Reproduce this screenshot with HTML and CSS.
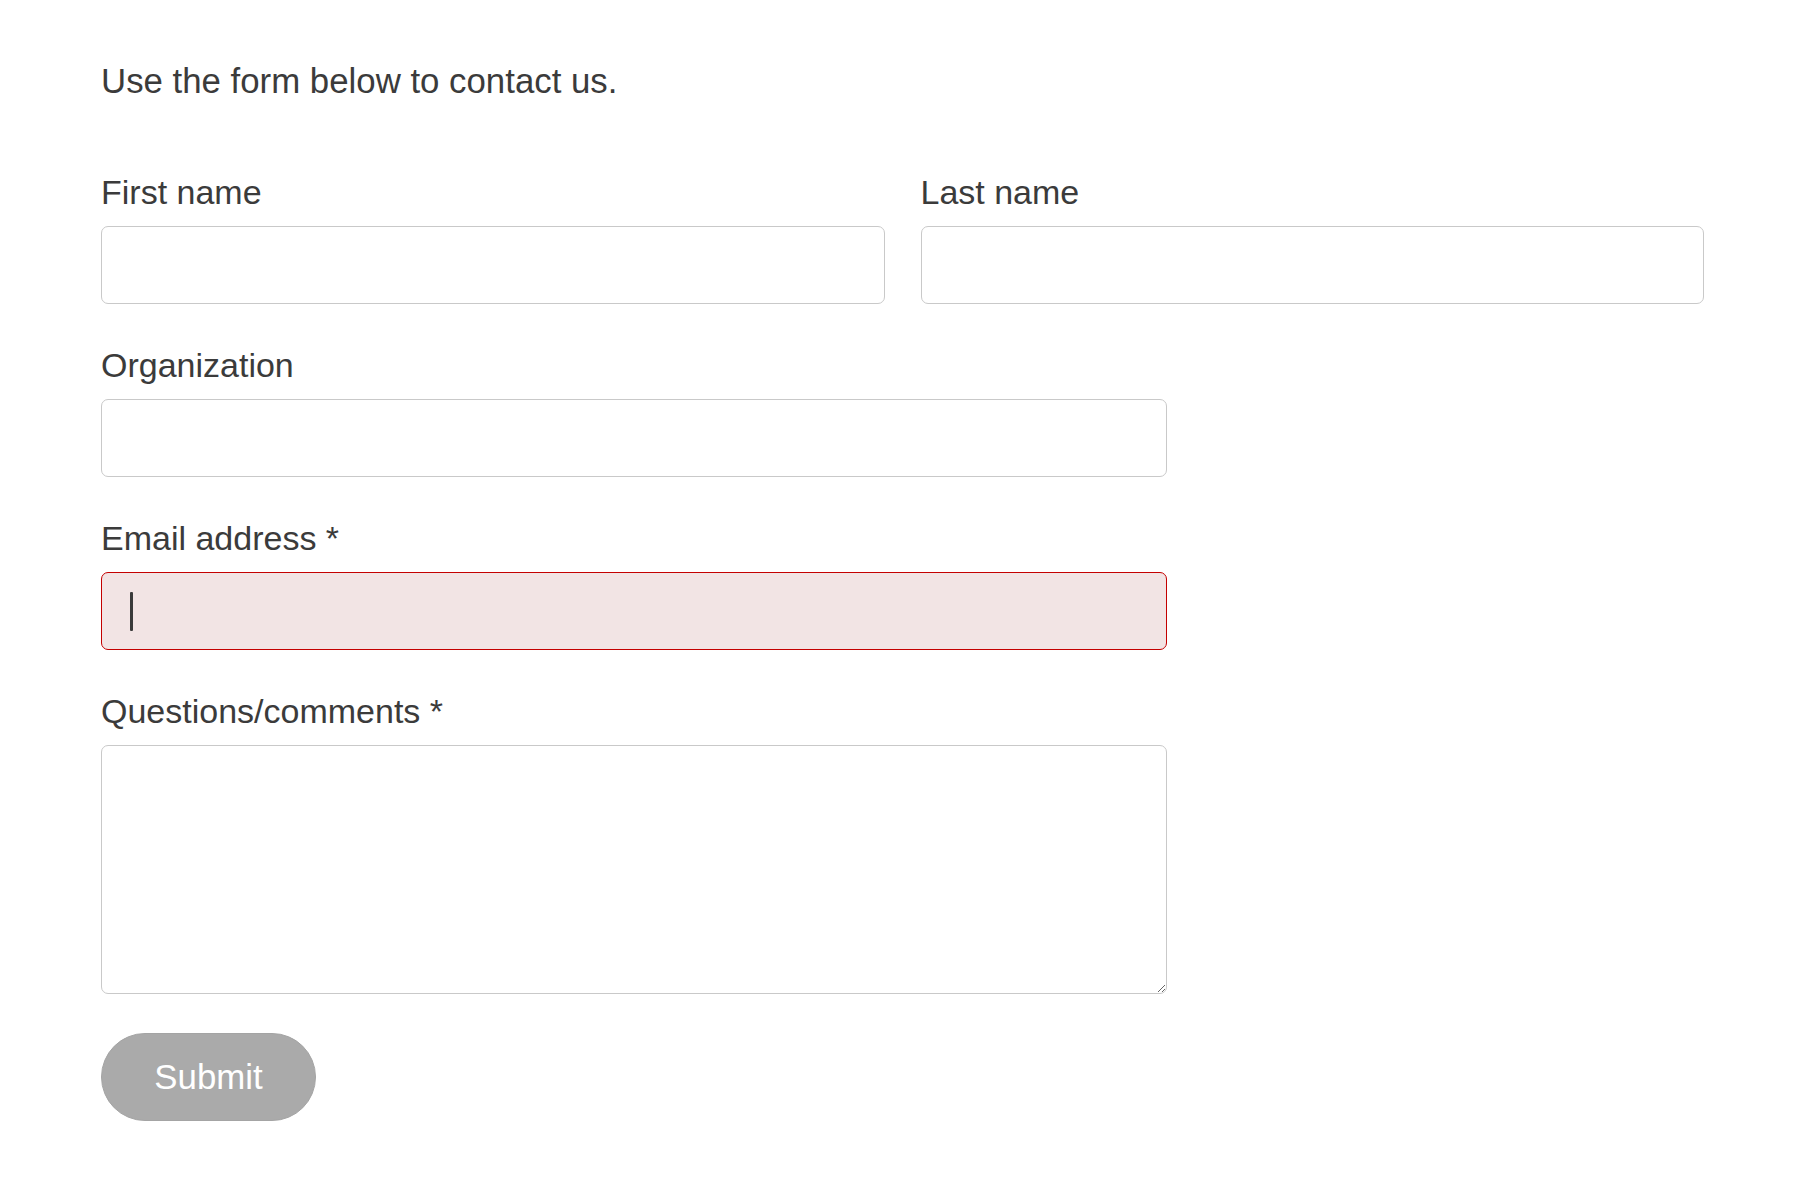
FILE: index.html
```html
<!DOCTYPE html>
<html lang="en">
<head>
<meta charset="utf-8">
<title>Contact us</title>
<link rel="stylesheet" href="styles.css">
</head>
<body>
<main class="page">
  <p class="intro">Use the form below to contact us.</p>
  <form class="contact-form" onsubmit="return false">
    <div class="row-two">
      <div class="field">
        <label class="label" for="first">First name</label>
        <input class="input" id="first" type="text">
      </div>
      <div class="field">
        <label class="label" for="last">Last name</label>
        <input class="input" id="last" type="text">
      </div>
    </div>
    <div class="field narrow">
      <label class="label" for="org">Organization</label>
      <input class="input" id="org" type="text">
    </div>
    <div class="field narrow">
      <label class="label" for="email">Email address *</label>
      <div class="input-wrap">
        <input class="input input-error" id="email" type="email">
        <span class="caret"></span>
      </div>
    </div>
    <div class="field narrow">
      <label class="label" for="comments">Questions/comments *</label>
      <textarea class="input textarea" id="comments"></textarea>
    </div>
    <div class="actions">
      <button class="submit" type="submit">Submit</button>
    </div>
  </form>
</main>
</body>
</html>
```
FILE: styles.css
```css
html, body {
  margin: 0;
  padding: 0;
  background: #ffffff;
}

body {
  font-family: "Liberation Sans", Arial, Helvetica, sans-serif;
  color: #3b3b3b;
  font-size: 34px;
  line-height: 48px;
}

.page {
  padding: 57px 96px 0 101px;
}

.intro {
  margin: 0 0 62px 0;
  font-size: 34.8px;
}

.contact-form {
  display: flex;
  flex-direction: column;
  gap: 36px;
}

.row-two {
  display: grid;
  grid-template-columns: 1fr 1fr;
  column-gap: 36px;
}

.field {
  display: flex;
  flex-direction: column;
  gap: 11px;
}

.narrow {
  width: 1066px;
}

.label {
  display: block;
  position: relative;
  top: 1px;
}

.input {
  box-sizing: border-box;
  width: 100%;
  height: 78px;
  margin: 0;
  padding: 0 28px;
  border: 1.5px solid #c9c9c9;
  border-radius: 7px;
  background: #ffffff;
  font-family: inherit;
  font-size: 34px;
  color: #3b3b3b;
  outline: none;
}

.input-wrap {
  position: relative;
}

.input-error {
  display: block;
  background: #f2e4e4;
  border: 1.5px solid #c40000;
}

.caret {
  position: absolute;
  left: 29px;
  top: 20px;
  width: 3px;
  height: 39px;
  border-radius: 1px;
  background: #3a3a3a;
}

.textarea {
  display: block;
  height: 249px;
  padding: 18px 28px;
  resize: both;
}

.actions {
  padding-top: 3px;
}

.submit {
  box-sizing: border-box;
  width: 215px;
  height: 88px;
  border: 1px solid #a4a4a4;
  border-radius: 44px;
  background: #aaaaaa;
  color: #ffffff;
  font-family: inherit;
  font-size: 34.8px;
  padding: 0;
  cursor: pointer;
}
```
